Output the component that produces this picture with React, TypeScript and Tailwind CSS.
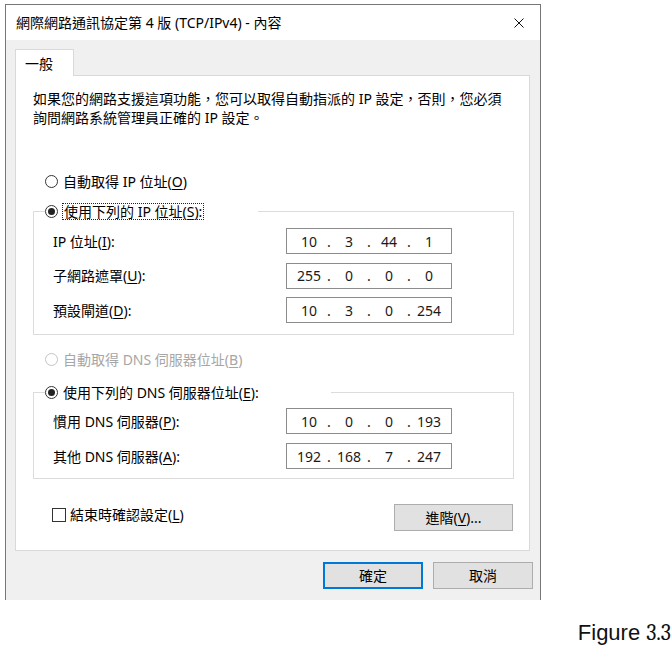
import { Fragment } from 'react'

const ui = "font-[family-name:'Noto_Sans','Noto_Sans_CJK_TC',sans-serif]"

type RadioProps = {
  checked?: boolean
  disabled?: boolean
}

const Radio: React.FC<RadioProps> = ({ checked, disabled }) => (
  <span
    className={
      disabled
        ? 'w-[13px] h-[13px] rounded-full border border-[#c4c4c4] bg-white shrink-0'
        : 'w-[13px] h-[13px] rounded-full border border-[#333333] bg-white shrink-0 flex items-center justify-center'
    }
  >
    {checked && <span className="w-[7px] h-[7px] rounded-full bg-[#222222]" />}
  </span>
)

// access key letter, underlined like a Win32 label
const Key: React.FC<{ k: string }> = ({ k }) => (
  <>
    (<span className="underline underline-offset-2">{k}</span>)
  </>
)

const IpBox: React.FC<{ parts: string[] }> = ({ parts }) => (
  <div className="w-[166px] h-[26px] border border-[#8c8c8c] bg-white flex items-center pl-[8px] text-[14px] text-[#1a1a1a]">
    {parts.map((p, i) => (
      <Fragment key={i}>
        <span className="w-[28px] text-center">{p}</span>
        {i < 3 && <span className="w-[12px] text-center">.</span>}
      </Fragment>
    ))}
  </div>
)

type FieldProps = {
  label: React.ReactNode
  parts: string[]
}

const Field: React.FC<FieldProps> = ({ label, parts }) => (
  <div className="flex items-center ml-[8px]">
    <span className="w-[233px] leading-[17px]">{label}</span>
    <IpBox parts={parts} />
  </div>
)

export default function App() {
  return (
    <div className={`w-[672px] h-[649px] bg-white overflow-hidden text-[14px] text-black ${ui}`}>
      <div className="pl-[5px] pt-[4px]">
        <div className="w-[536px] h-[596px] border border-b-0 border-[#777777] bg-[#f0f0f0] flex flex-col">
          {/* title bar */}
          <div className="h-[35px] bg-white flex items-center justify-between pl-[10px] pr-[16px]">
            <span className="leading-[17px]">網際網路通訊協定第 4 版 (TCP/IPv4) - 內容</span>
            <svg width="10" height="10" viewBox="0 0 10 10" className="shrink-0">
              <path d="M0.5 0.5 L9.5 9.5 M9.5 0.5 L0.5 9.5" stroke="#111" strokeWidth="1" />
            </svg>
          </div>

          <div className="pt-[9px] pl-[9px]">
            {/* tab */}
            <div className="relative z-10 -mb-px w-[59px] h-[27px] border border-b-0 border-[#d9d9d9] bg-white flex items-center pl-[9px]">
              一般
            </div>

            {/* panel */}
            <div className="w-[515px] border border-[#d9d9d9] bg-white pl-[17px] pr-[15px] pt-[13px] pb-[19px]">
              <p className="leading-[19px]">
                如果您的網路支援這項功能，您可以取得自動指派的 IP 設定，否則，您必須
                <br />
                詢問網路系統管理員正確的 IP 設定。
              </p>

              <div className="mt-[46px] ml-[12px] flex items-center gap-[5px] h-[17px]">
                <Radio />
                <span>
                  自動取得 IP 位址<Key k="O" />
                </span>
              </div>

              <fieldset className="mt-[13px] border border-[#dcdcdc] pl-[11px] pt-[8px] pb-[11px] flex flex-col gap-[8.5px]">
                <legend className="w-[213px] h-[17px] flex items-center gap-[5px]">
                  <Radio checked />
                  <span className="outline outline-1 outline-dotted outline-[#222] leading-[15px] px-px">
                    使用下列的 IP 位址<Key k="S" />:
                  </span>
                </legend>
                <Field label={<>IP 位址<Key k="I" />:</>} parts={['10', '3', '44', '1']} />
                <Field label={<>子網路遮罩<Key k="U" />:</>} parts={['255', '0', '0', '0']} />
                <Field label={<>預設閘道<Key k="D" />:</>} parts={['10', '3', '0', '254']} />
              </fieldset>

              <div className="mt-[16px] ml-[12px] flex items-center gap-[5px] h-[17px] text-[#a6a6a6]">
                <Radio disabled />
                <span>
                  自動取得 DNS 伺服器位址<Key k="B" />
                </span>
              </div>

              <fieldset className="mt-[16px] border border-[#dcdcdc] pl-[11px] pt-[7px] pb-[9px] flex flex-col gap-[9px]">
                <legend className="w-[286px] h-[17px] flex items-center gap-[5px]">
                  <Radio checked />
                  <span>
                    使用下列的 DNS 伺服器位址<Key k="E" />:
                  </span>
                </legend>
                <Field label={<>慣用 DNS 伺服器<Key k="P" />:</>} parts={['10', '0', '0', '193']} />
                <Field label={<>其他 DNS 伺服器<Key k="A" />:</>} parts={['192', '168', '7', '247']} />
              </fieldset>

              <div className="mt-[25px] flex items-start justify-between">
                <label className="mt-[2px] ml-[19px] flex items-center gap-[4px] h-[17px]">
                  <span className="w-[14px] h-[14px] border border-[#333333] bg-white" />
                  <span>
                    結束時確認設定<Key k="L" />
                  </span>
                </label>
                <button className="mr-[1px] w-[119px] h-[27px] border border-[#adadad] bg-[#e1e1e1] flex items-center justify-center">
                  進階<Key k="V" />...
                </button>
              </div>
            </div>
          </div>

          {/* footer */}
          <div className="mt-[11px] flex justify-end gap-[10px] pr-[7px]">
            <button className="w-[100px] h-[27px] border-2 border-[#0078d7] bg-[#e1e1e1] flex items-center justify-center">
              確定
            </button>
            <button className="w-[100px] h-[27px] border border-[#adadad] bg-[#e1e1e1] flex items-center justify-center">
              取消
            </button>
          </div>
        </div>
      </div>

      <div className="mt-[22px] flex justify-end items-baseline pr-[1px] text-[22px] leading-[22px] text-[#111]">
        <span className="font-[family-name:'Liberation_Sans',Arial,sans-serif]">Figure</span>
        <span className="ml-[6px] font-serif">3.3</span>
      </div>
    </div>
  )
}
